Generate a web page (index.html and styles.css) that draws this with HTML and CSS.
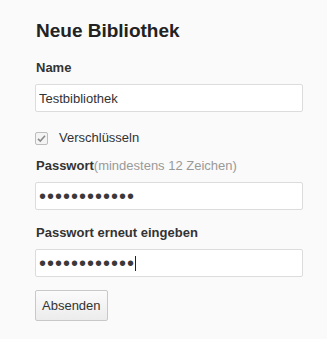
FILE: index.html
```html
<!DOCTYPE html>
<html lang="de">
<head>
    <meta charset="UTF-8">
    <meta name="viewport" content="width=device-width, initial-scale=1.0">
    <title>Neue Bibliothek</title>
    <link rel="stylesheet" href="styles.css">
</head>
<body>
    <form class="library-form" onsubmit="return false;">
        <h2 class="form-title">Neue Bibliothek</h2>

        <div class="field">
            <label class="field-label" for="name">Name</label>
            <input class="text-input" id="name" type="text" value="Testbibliothek">
        </div>

        <label class="check-row">
            <span class="check-box">
                <svg width="11" height="11" viewBox="0 0 11 11">
                    <path d="M2 5.8 L4.3 8 L9 2.8" fill="none" stroke="#8a8a8a" stroke-width="1.6"/>
                </svg>
            </span>
            Verschlüsseln
        </label>

        <div class="field">
            <label class="field-label" for="pw">Passwort<span class="hint">(mindestens 12 Zeichen)</span></label>
            <input class="text-input" id="pw" type="password" value="abcdefghijkl">
        </div>

        <div class="field">
            <label class="field-label" for="pw2">Passwort erneut eingeben</label>
            <div class="input-wrap">
                <input class="text-input" id="pw2" type="password" value="abcdefghijkl">
                <span class="caret"></span>
            </div>
        </div>

        <button class="submit-btn" type="submit">Absenden</button>
    </form>
</body>
</html>
```

FILE: styles.css
```css
body {
    margin: 0;
    background-color: #fafafa;
    font-family: "Liberation Sans", Arial, sans-serif;
    font-size: 13px;
    color: #333;
}

.library-form {
    width: 268px;
    padding: 19px 0 0 35px;
}

.form-title {
    margin: 0 0 17px 1px;
    font-size: 19px;
    line-height: 23px;
    font-weight: bold;
    color: #222;
}

.field {
    margin-bottom: 14px;
}

.field-label {
    display: block;
    margin: 0 0 7px 1px;
    line-height: 18px;
    font-weight: bold;
}

.hint {
    font-weight: normal;
    color: #999;
}

.text-input {
    display: block;
    box-sizing: border-box;
    width: 268px;
    height: 28px;
    margin: 0;
    padding: 0 3px;
    border: 1px solid #dcdcdc;
    border-radius: 2px;
    background: #fff;
    font-family: "Liberation Sans", Arial, sans-serif;
    font-size: 13px;
    color: #333;
    outline: none;
}

.text-input[type="password"] {
    font-size: 20px;
    letter-spacing: 1px;
    color: #3a3a3a;
}

.input-wrap {
    position: relative;
}

.caret {
    position: absolute;
    left: 100px;
    top: 7px;
    width: 1px;
    height: 15px;
    background: #222;
}

.check-row {
    display: flex;
    align-items: center;
    gap: 11px;
    margin: 17px 0 10px;
    line-height: 18px;
}

.check-box {
    display: flex;
    align-items: center;
    justify-content: center;
    box-sizing: border-box;
    width: 13px;
    height: 13px;
    border: 1px solid #bdbdbd;
    border-radius: 2px;
    background: #f4f4f4;
}

.submit-btn {
    display: block;
    margin: -1px 0 0;
    padding: 0 6px;
    height: 31px;
    border: 1px solid #c8c8c8;
    border-radius: 2px;
    background: linear-gradient(#fbfbfb, #ececec);
    font-family: "Liberation Sans", Arial, sans-serif;
    font-size: 13px;
    color: #333;
}
```
